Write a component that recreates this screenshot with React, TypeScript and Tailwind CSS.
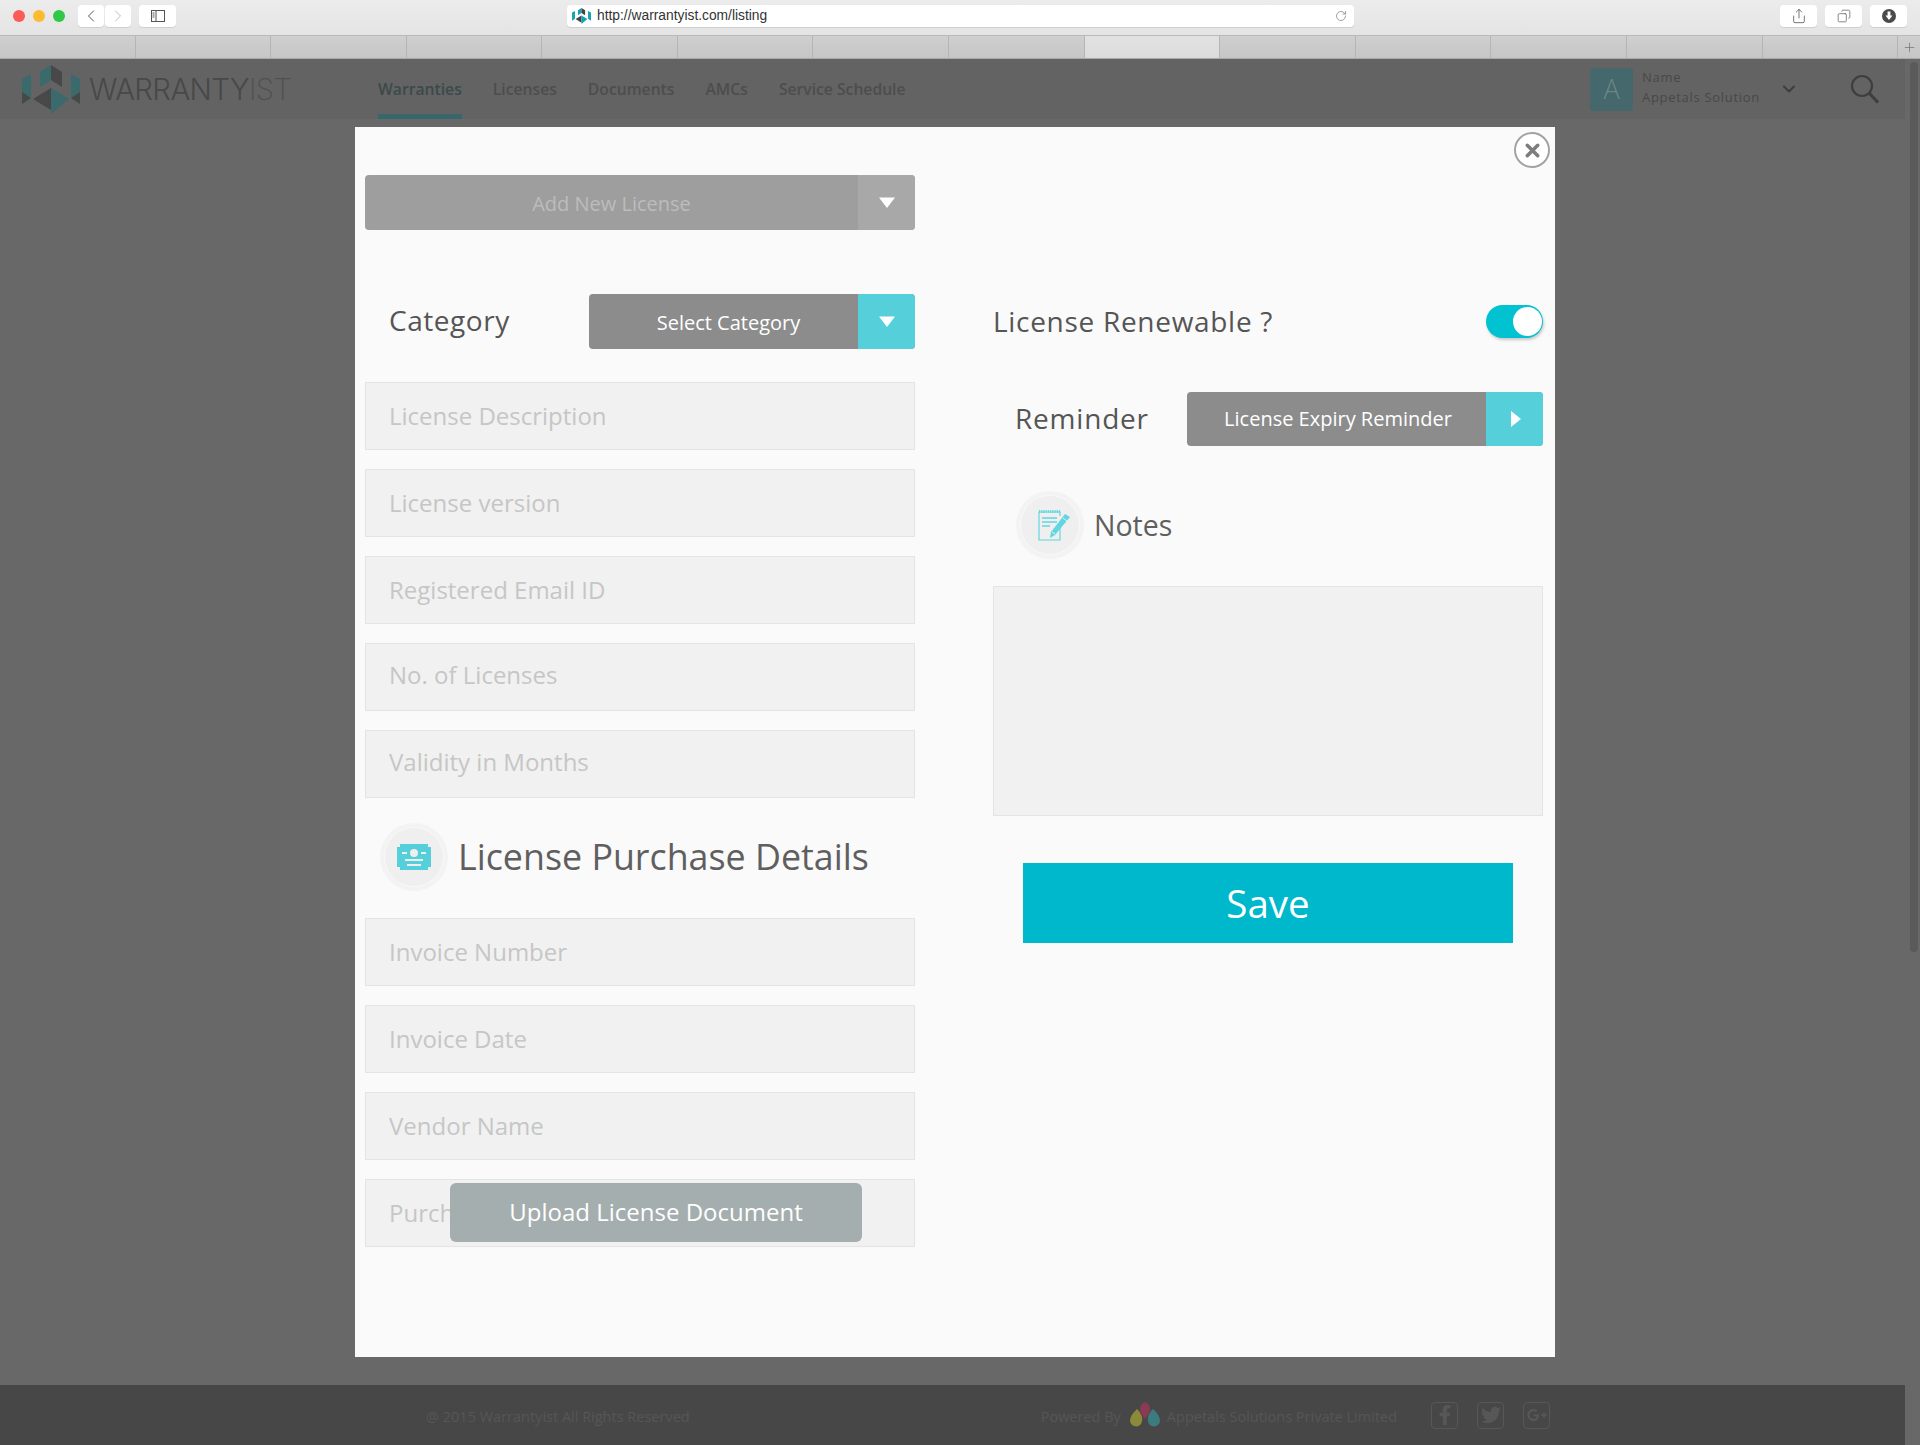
import React from 'react';
import { ChevronLeft, ChevronRight, ChevronDown, RotateCw, Share, Copy, Plus, X } from 'lucide-react';
import { FaFacebookF, FaTwitter, FaGooglePlusG } from 'react-icons/fa';

const font = { fontFamily: '"Open Sans", "Noto Sans", sans-serif' };

const navItems = ['Warranties', 'Licenses', 'Documents', 'AMCs', 'Service Schedule'];
const topFields = ['License Description', 'License version', 'Registered Email ID', 'No. of Licenses', 'Validity in Months'];
const purchaseFields = ['Invoice Number', 'Invoice Date', 'Vendor Name', 'Purchase Date'];

const Caret = ({ right = false }: { right?: boolean }) => (
  <svg width="18" height="18" viewBox="0 0 18 18" fill="#fff">
    {right ? <path d="M5 1 L15 9 L5 17 Z" /> : <path d="M1 3.5 L17 3.5 L9 14 Z" />}
  </svg>
);

const Logo = () => (
  <svg width="58" height="49" viewBox="0 0 58 49">
    <path d="M18 7 L29 0 L29 15 L18 22 Z" fill="#3a6a6c" />
    <path d="M29 0 L40 7 L40 22 L29 15 Z" fill="#484848" />
    <path d="M0 14 L9 9 L9 33 L0 39 Z" fill="#3a6a6c" />
    <path d="M49 9 L58 14 L58 39 L49 33 Z" fill="#3a6a6c" />
    <path d="M0 39 L9 33 L0 27 Z" fill="#484848" />
    <path d="M58 39 L49 33 L58 27 Z" fill="#484848" />
    <path d="M29 23 L11 34 L29 45 Z" fill="#484848" />
    <path d="M29 23 L47 34 L29 49 Z" fill="#3a6a6c" />
  </svg>
);

const SafariButton = ({ children, className = '' }: { children: React.ReactNode; className?: string }) => (
  <div className={`flex h-[22px] items-center rounded-[4px] bg-white shadow-[0_1px_0_#cfcfcf] ${className}`}>
    {children}
  </div>
);

const Field = ({ placeholder }: { placeholder: string }) => (
  <input
    placeholder={placeholder}
    className={`block h-[68px] w-full border border-[#e4e4e4] bg-[#f1f1f1] pl-[23px] text-[24px] text-[#555] outline-none placeholder:text-[#c6c6c6] ${
      placeholder === 'No. of Licenses' || placeholder === 'Validity in Months' ? 'pb-[5px]' : 'pb-[2px]'
    }`}
  />
);

const IconCircle = ({ children }: { children: React.ReactNode }) => (
  <div className="flex h-[68px] w-[68px] shrink-0 items-center justify-center rounded-full bg-[#f3f3f3]">
    <div className="flex h-[60px] w-[60px] items-center justify-center rounded-full border border-[#f9f9f9] bg-[#efefef]">
      {children}
    </div>
  </div>
);

const SelectButton = ({
  label,
  className,
  tabClass,
  textClass,
  right = false,
}: {
  label: string;
  className: string;
  tabClass: string;
  textClass: string;
  right?: boolean;
}) => (
  <div className={`flex overflow-hidden rounded-[4px] ${className}`}>
    <div className={`flex flex-1 items-center justify-center ${textClass}`}>{label}</div>
    <div className={`flex w-[57px] items-center justify-center ${tabClass}`}>
      <Caret right={right} />
    </div>
  </div>
);

export default function App() {
  return (
    <div className="relative flex h-[1445px] w-[1920px] flex-col overflow-hidden bg-[#686868]" style={font}>
      {/* Browser toolbar */}
      <div className="flex h-[36px] items-center border-b border-[#b9b9b9] bg-gradient-to-b from-[#ececec] to-[#e4e4e4] pb-[3px]">
        <div className="ml-[13px] flex gap-[8px]">
          <span className="h-[12px] w-[12px] rounded-full bg-[#fc5b57]" />
          <span className="h-[12px] w-[12px] rounded-full bg-[#fdbc2f]" />
          <span className="h-[12px] w-[12px] rounded-full bg-[#33c748]" />
        </div>
        <SafariButton className="ml-[13px] w-[26px] justify-center">
          <ChevronLeft size={20} strokeWidth={1.2} className="text-[#555]" />
        </SafariButton>
        <SafariButton className="ml-px w-[26px] justify-center">
          <ChevronRight size={20} strokeWidth={1.2} className="text-[#bbb]" />
        </SafariButton>
        <SafariButton className="ml-[8px] w-[37px] justify-center">
          <svg width="14" height="12" viewBox="0 0 14 12" fill="none" stroke="#555">
            <rect x="0.5" y="0.5" width="13" height="11" />
            <path d="M5 0.5 V11.5" />
            <path d="M1.5 3 H3.5 M1.5 5 H3.5 M1.5 7 H3.5" />
          </svg>
        </SafariButton>
        <SafariButton className="ml-[391px] w-[787px] justify-between pl-[5px] pr-[7px]">
          <div className="flex items-center gap-[6px]">
            <svg width="19" height="16" viewBox="0 0 58 49">
              <path d="M18 7 L29 0 L29 15 L18 22 Z" fill="#14a3b5" />
              <path d="M29 0 L40 7 L40 22 L29 15 Z" fill="#444" />
              <path d="M0 14 L9 9 L9 33 L0 39 Z" fill="#14a3b5" />
              <path d="M49 9 L58 14 L58 39 L49 33 Z" fill="#14a3b5" />
              <path d="M29 23 L11 34 L29 45 Z" fill="#444" />
              <path d="M29 23 L47 34 L29 49 Z" fill="#14a3b5" />
            </svg>
            <span className="text-[13.8px] text-[#333]" style={{ fontFamily: '"Liberation Sans", sans-serif' }}>
              http://warrantyist.com/listing
            </span>
          </div>
          <RotateCw size={12} strokeWidth={1.2} className="text-[#666]" />
        </SafariButton>
        <SafariButton className="ml-[426px] w-[37px] justify-center">
          <Share size={16} strokeWidth={1.2} className="text-[#555]" />
        </SafariButton>
        <SafariButton className="ml-[8px] w-[37px] justify-center">
          <Copy size={14} strokeWidth={1.2} className="-scale-x-100 text-[#555]" />
        </SafariButton>
        <SafariButton className="ml-[8px] w-[37px] justify-center">
          <svg width="14" height="14" viewBox="0 0 14 14">
            <circle cx="7" cy="7" r="7" fill="#4a4a4a" />
            <path d="M5.6 2.5 H8.4 V6.5 H10.5 L7 11 L3.5 6.5 H5.6 Z" fill="#fff" />
          </svg>
        </SafariButton>
      </div>

      {/* Tab bar */}
      <div className="flex h-[23px] border-b border-[#a9a9a9] bg-gradient-to-b from-[#cfcfcf] to-[#c6c6c6]">
        {Array.from({ length: 14 }).map((_, i) => (
          <div
            key={i}
            className={`flex-1 border-r border-[#b5b5b5] ${i === 8 ? 'bg-gradient-to-b from-[#e2e2e2] to-[#dcdcdc]' : ''}`}
          />
        ))}
        <div className="flex w-[22px] items-center justify-center">
          <Plus size={15} strokeWidth={1} className="text-[#666]" />
        </div>
      </div>

      {/* Dimmed page header */}
      <header className="flex h-[60px] items-center bg-[#636363]">
        <div className="ml-[22px]">
          <Logo />
        </div>
        <div
          className="ml-[9px] w-[205px] whitespace-nowrap pt-[2px] text-[29.4px] font-light leading-none tracking-[-0.6px] text-[#484848]"
          style={{ fontFamily: 'Inter, sans-serif' }}
        >
          WARRANTY<span className="font-extralight text-[#505050]">IST</span>
        </div>
        <nav className="ml-[84px] flex h-full gap-[31px]">
          {navItems.map((item, i) => (
            <div
              key={item}
              className={`flex h-full items-center border-b-[5px] pt-[7px] text-[15.7px] font-semibold ${
                i === 0 ? 'border-[#37676a] text-[#3a4a4b]' : 'border-transparent text-[#4d4d4d]'
              }`}
            >
              {item}
            </div>
          ))}
        </nav>
        <div className="ml-auto flex h-[43px] w-[43px] items-center justify-center rounded-[3px] bg-[#44686b] text-[27px] font-light text-[#6e8587]">
          A
        </div>
        <div className="mb-[4px] ml-[9px] w-[137px] whitespace-nowrap text-[13px] leading-[20px] tracking-[0.7px] text-[#484848]">
          <div>Name</div>
          <div>Appetals Solution</div>
        </div>
        <ChevronDown size={20} strokeWidth={2.5} className="text-[#3e3e3e]" />
        <svg className="ml-[51px] mr-[40px]" width="30" height="30" viewBox="0 0 30 30" fill="none" stroke="#3e3e3e">
          <circle cx="12" cy="12" r="10" strokeWidth="2.2" />
          <path d="M19.5 19.5 L28 28.5" strokeWidth="3.2" />
        </svg>
      </header>

      <div className="flex-1" />

      {/* Dimmed page footer */}
      <footer className="mr-[15px] flex h-[60px] items-center bg-[#474747] pt-[3px] text-[#565656]">
        <span className="ml-[426px] text-[14.5px]">@ 2015 Warrantyist All Rights Reserved</span>
        <span className="ml-[351px] text-[14.5px]">Powered By</span>
        <svg className="mb-[3px] ml-[9px]" width="30" height="26" viewBox="0 0 30 26">
          <path d="M7 7 C11 11 14 16 11 22 C8 26 1 25 0 19 C0 14 4 10 7 7 Z" fill="#8b8a3a" />
          <path d="M23 7 C19 11 16 16 19 22 C22 26 29 25 30 19 C30 14 26 10 23 7 Z" fill="#3d7c7e" />
          <path d="M15 0 C19 2 24 6 15 17 C6 6 11 2 15 0 Z" fill="#8a3a52" />
        </svg>
        <span className="ml-[7px] text-[14.5px]">Appetals Solutions Private Limited</span>
        <div className="mb-[3px] ml-[34px] flex gap-[19px]">
          {[FaFacebookF, FaTwitter, FaGooglePlusG].map((Icon, i) => (
            <div key={i} className="flex h-[27px] w-[27px] items-center justify-center rounded-[4px] border border-[#575757]">
              <Icon size={20} className="text-[#575757]" />
            </div>
          ))}
        </div>
      </footer>

      {/* Scrollbar */}
      <div className="absolute bottom-0 right-0 top-[59px] w-[15px] bg-[#686868]">
        <div className="ml-[5px] mt-[3px] h-[890px] w-[8px] rounded-full bg-[#5a5a5a]" />
      </div>

      {/* Modal */}
      <div className="absolute left-[355px] top-[127px] flex h-[1230px] w-[1200px] bg-[#fafafa] pt-[48px]">
        <button className="absolute right-[5px] top-[5px] flex h-[36px] w-[36px] items-center justify-center rounded-full border-2 border-[#a3a3a3] bg-white">
          <X size={21} strokeWidth={4} className="text-[#7d7d7d]" />
        </button>

        {/* Left column */}
        <div className="ml-[10px] w-[550px]">
          <SelectButton
            label="Add New License"
            className="h-[55px] bg-[#9e9e9e]"
            tabClass="bg-[#a8a8a8]"
            textClass="pt-[2px] text-[20px] text-[#bcbcbc]"
          />

          <div className="mt-[64px] flex h-[55px] items-center">
            <span className="mb-[4px] ml-6 w-[200px] text-[28px] tracking-[0.55px] text-[#555]">Category</span>
            <SelectButton
              label="Select Category"
              className="h-[55px] w-[326px] bg-[#8c8c8c]"
              tabClass="bg-[#55cfd9]"
              textClass="pl-[10px] pt-[2px] text-[20px] text-white"
            />
          </div>

          <div className="mt-[33px] flex flex-col gap-[19px]">
            {topFields.map((f) => (
              <Field key={f} placeholder={f} />
            ))}
          </div>

          <div className="ml-[15px] mb-[27px] mt-[25px] flex items-center gap-[10px]">
            <IconCircle>
              <svg width="34" height="26" viewBox="0 0 34 26">
                <path d="M3 0 H31 V3 H34 V23 H31 V26 H3 V23 H0 V3 H3 Z" fill="#55cfd9" />
                <circle cx="17" cy="9" r="4" fill="#efefef" />
                <path d="M5 9 H10 M24 9 H29 M8 16 H26 M10 21 H24" stroke="#efefef" strokeWidth="2" />
              </svg>
            </IconCircle>
            <span className="mb-[1px] text-[35.8px] leading-none text-[#5f5f5f]">License Purchase Details</span>
          </div>

          <div className="relative flex flex-col gap-[19px]">
            {purchaseFields.map((f) => (
              <Field key={f} placeholder={f} />
            ))}
            <button className="absolute bottom-[5px] left-[85px] flex h-[59px] w-[412px] items-center justify-center rounded-[6px] bg-[#a5aeae] pb-[2px] text-[24px] text-white">
              Upload License Document
            </button>
          </div>
        </div>

        {/* Right column */}
        <div className="ml-[78px] w-[550px] pt-[130px]">
          <div className="flex h-[33px] items-center justify-between">
            <span className="mb-[2px] text-[28px] tracking-[0.7px] text-[#555]">License Renewable ?</span>
            <div className="flex h-[33px] w-[57px] items-center justify-end rounded-full bg-[#00c2d1] pr-[1px] shadow-[1px_2px_3px_rgba(0,0,0,0.2)]">
              <div className="h-[29px] w-[29px] rounded-full bg-white" />
            </div>
          </div>

          <div className="mt-[54px] flex h-[54px] items-center">
            <span className="mb-[2px] ml-[22px] w-[172px] text-[28px] tracking-[0.8px] text-[#555]">Reminder</span>
            <SelectButton
              label="License Expiry Reminder"
              className="h-[54px] w-[356px] bg-[#8c8c8c]"
              tabClass="bg-[#55cfd9]"
              textClass="pl-[3px] text-[20px] text-white"
              right
            />
          </div>

          <div className="ml-[23px] mt-[45px] flex items-center gap-[10px]">
            <IconCircle>
              <svg className="ml-[8px]" width="34" height="34" viewBox="0 0 34 34" fill="none" stroke="#62d6df" strokeWidth="1.2">
                <path d="M23 17 V32 H2 V4 H23 V8" />
                <path d="M2 3.5 H23" strokeWidth="3" strokeDasharray="1.2 1" />
                <path d="M5 10 H20 M5 14 H20 M5 18 H13" strokeWidth="1.5" />
                <path d="M13 30 L14 24 L28 6 L33 9 L18 27 Z" fill="#62d6df" stroke="none" />
                <path d="M15 24 L18 26 M26 10 L30 13" stroke="#efefef" strokeWidth="1" />
              </svg>
            </IconCircle>
            <span className="pt-[1px] text-[28.5px] leading-none text-[#5f5f5f]">Notes</span>
          </div>

          <textarea className="mt-[27px] block h-[230px] w-full resize-none border border-[#e4e4e4] bg-[#f1f1f1] outline-none" />

          <button className="ml-[30px] mt-[47px] block h-[80px] w-[490px] bg-[#00b8cc] pt-[2px] text-[38.5px] text-white">
            Save
          </button>
        </div>
      </div>
    </div>
  );
}
